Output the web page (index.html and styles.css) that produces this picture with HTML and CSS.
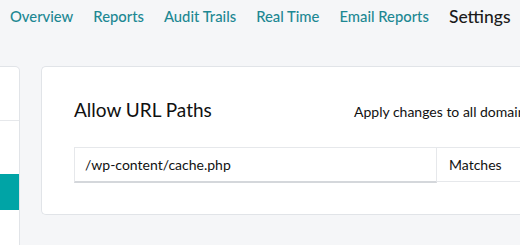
FILE: index.html
```html
<!DOCTYPE html>
<html lang="en">
<head>
    <meta charset="UTF-8">
    <title>Settings</title>
    <link rel="stylesheet" href="styles.css">
</head>
<body>
    <nav class="tabs">
        <a class="tab">Overview</a>
        <a class="tab">Reports</a>
        <a class="tab">Audit Trails</a>
        <a class="tab">Real Time</a>
        <a class="tab">Email Reports</a>
        <a class="tab active">Settings</a>
    </nav>

    <div class="layout">
        <aside class="side-card">
            <div class="side-top"></div>
            <div class="side-item"></div>
            <div class="side-item selected"></div>
            <div class="side-item"></div>
        </aside>

        <section class="panel">
            <div class="panel-head">
                <h2>Allow URL Paths</h2>
                <span class="apply">Apply changes to all domains</span>
            </div>
            <div class="path-row">
                <div class="path-input">/wp-content/cache.php</div>
                <div class="path-match">Matches</div>
            </div>
        </section>
    </div>
</body>
</html>
```

FILE: styles.css
```css
body {
    margin: 0;
    background-color: #f5f6f8;
    font-family: Lato, "Open Sans", sans-serif;
    color: #111;
    width: 520px;
    height: 245px;
    overflow: hidden;
}

.tabs {
    display: flex;
    gap: 20px;
    padding: 1px 0 0 10px;
    height: 30px;
    align-items: center;
    white-space: nowrap;
}
.tab {
    color: #1d8893;
    font-size: 14.8px;
    font-weight: 500;
}
.tab.active {
    color: #1b1b1b;
    font-size: 17.5px;
}

.layout {
    display: flex;
    gap: 21px;
    margin-top: 35px;
}

.side-card {
    width: 19px;
    height: 200px;
    flex-shrink: 0;
    background: #fff;
    border: 1px solid #e1e4e8;
    border-left: none;
    border-radius: 0 5px 0 0;
}
.side-top {
    height: 53px;
    border-bottom: 1px solid #e6e8eb;
}
.side-item {
    height: 53px;
}
.side-item.selected {
    height: 36px;
    background: #00a4a6;
}

.panel {
    flex: 1;
    height: 149px;
    background: #fff;
    border: 1px solid #e1e4e8;
    border-right: none;
    border-radius: 5px 0 0 5px;
    padding: 0 0 0 32px;
    box-sizing: border-box;
}
.panel-head {
    display: flex;
    align-items: baseline;
    height: 80px;
    box-sizing: border-box;
    padding-top: 31px;
}
.panel-head h2 {
    margin: 0;
    font-weight: 400;
    font-size: 19px;
    width: 280px;
}
.apply {
    font-size: 14px;
    white-space: nowrap;
}

.path-row {
    display: flex;
    height: 36px;
}
.path-input {
    width: 363px;
    border: 1px solid #e6e8eb;
    border-bottom: 2px solid #d4d7db;
    box-sizing: border-box;
    padding: 0 0 0 10px;
    display: flex;
    align-items: center;
    font-size: 14px;
    flex-shrink: 0;
}
.path-match {
    flex: 1;
    height: 35px;
    border: 1px solid #e6e8eb;
    border-left: none;
    border-right: none;
    box-sizing: border-box;
    padding-left: 12px;
    display: flex;
    align-items: center;
    font-size: 14px;
}
```
